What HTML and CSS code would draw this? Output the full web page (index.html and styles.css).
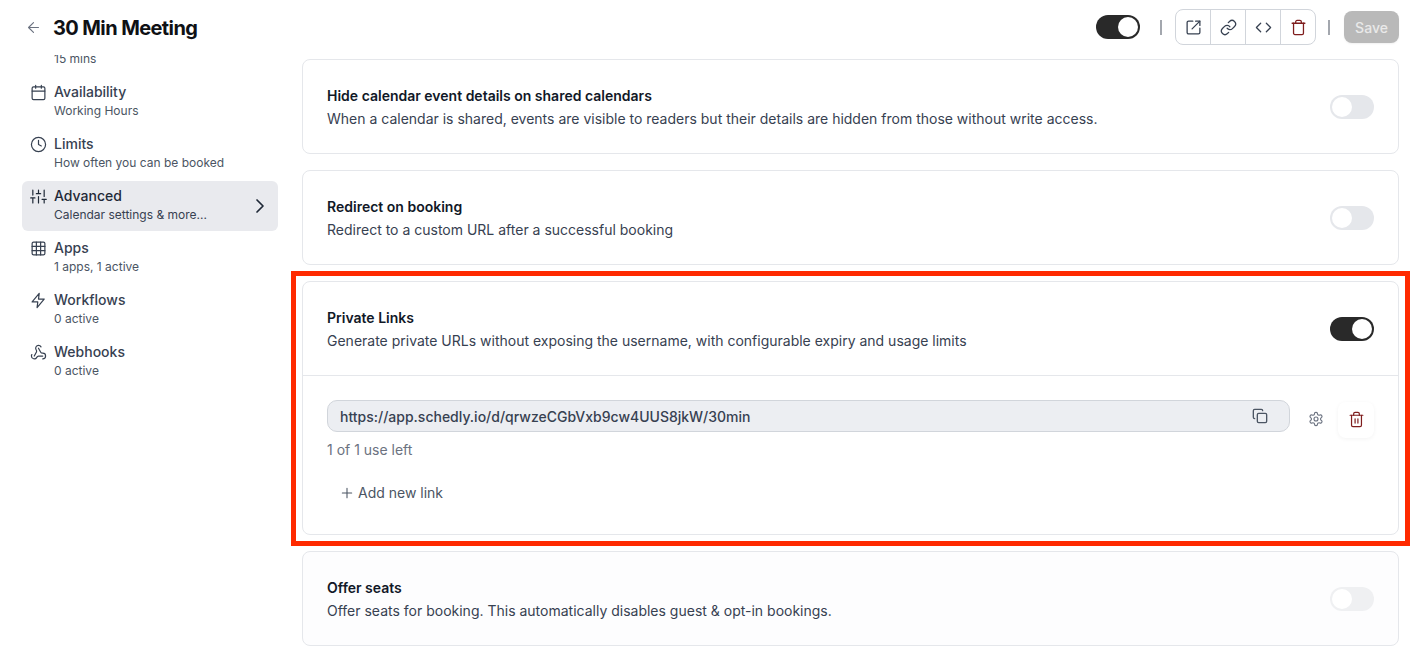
FILE: index.html
```html
<!DOCTYPE html>
<html lang="en">
<head>
<meta charset="utf-8">
<title>30 Min Meeting</title>
<link rel="stylesheet" href="styles.css">
</head>
<body>
<div class="page">
  <header class="top">
    <div class="top-left">
      <svg class="back" viewBox="0 0 24 24"><path d="M19 12H5M12 19l-7-7 7-7"/></svg>
      <h1>30 Min Meeting</h1>
    </div>
    <div class="top-right">
      <span class="toggle on"><i></i></span>
      <span class="sep"></span>
      <div class="btn-group">
        <span class="gbtn"><svg viewBox="0 0 24 24"><path d="M21 13v6a2 2 0 0 1-2 2H5a2 2 0 0 1-2-2V5a2 2 0 0 1 2-2h6"/><path d="M15 3h6v6"/><path d="M10 14 21 3"/></svg></span>
        <span class="gbtn"><svg viewBox="0 0 24 24"><path d="M10 13a5 5 0 0 0 7.54.54l3-3a5 5 0 0 0-7.07-7.07l-1.72 1.71"/><path d="M14 11a5 5 0 0 0-7.54-.54l-3 3a5 5 0 0 0 7.07 7.07l1.71-1.71"/></svg></span>
        <span class="gbtn"><svg viewBox="0 0 24 24"><path d="m16 18 6-6-6-6"/><path d="m8 6-6 6 6 6"/></svg></span>
        <span class="gbtn danger"><svg viewBox="0 0 24 24"><path d="M3 6h18"/><path d="M19 6v14a2 2 0 0 1-2 2H7a2 2 0 0 1-2-2V6"/><path d="M8 6V4a2 2 0 0 1 2-2h4a2 2 0 0 1 2 2v2"/></svg></span>
      </div>
      <span class="sep"></span>
      <button class="save">Save</button>
    </div>
  </header>
  <div class="body">
    <nav class="side">
      <div class="side-scroll">
        <a class="item"><span class="ic"></span><span class="lbl lbl-sub"><small>15 mins</small></span></a>
        <a class="item"><svg class="ic" viewBox="0 0 24 24"><path d="M8 2v4M16 2v4"/><rect x="3" y="4" width="18" height="18" rx="2"/><path d="M3 10h18"/></svg><span class="lbl"><b>Availability</b><small>Working Hours</small></span></a>
        <a class="item"><svg class="ic" viewBox="0 0 24 24"><circle cx="12" cy="12" r="10"/><path d="M12 6v6l4 2"/></svg><span class="lbl"><b>Limits</b><small>How often you can be booked</small></span></a>
        <a class="item active"><svg class="ic" viewBox="0 0 24 24"><path d="M4 21v-7M4 10V3M12 21v-9M12 8V3M20 21v-5M20 12V3M1 14h6M9 8h6M17 16h6"/></svg><span class="lbl"><b>Advanced</b><small>Calendar settings &amp; more...</small></span><svg class="chev" viewBox="0 0 24 24"><path d="m9 18 6-6-6-6"/></svg></a>
        <a class="item"><svg class="ic" viewBox="0 0 24 24"><rect x="3" y="3" width="18" height="18" rx="2"/><path d="M3 9h18M3 15h18M9 3v18M15 3v18"/></svg><span class="lbl"><b>Apps</b><small>1 apps, 1 active</small></span></a>
        <a class="item"><svg class="ic" viewBox="0 0 24 24"><path d="M13 2 3 14h8l-1 8 10-12h-8l1-8z"/></svg><span class="lbl"><b>Workflows</b><small>0 active</small></span></a>
        <a class="item"><svg class="ic" viewBox="0 0 24 24"><path d="M18 16.98h-5.99c-1.1 0-1.95.94-2.48 1.9A4 4 0 0 1 2 17c.01-.7.2-1.4.57-2"/><path d="m6 17 3.13-5.78c.53-.97.1-2.18-.5-3.1a4 4 0 1 1 6.89-4.06"/><path d="m12 6 3.13 5.73C15.66 12.7 16.9 13 18 13a4 4 0 0 1 0 8"/></svg><span class="lbl"><b>Webhooks</b><small>0 active</small></span></a>
      </div>
    </nav>
    <main class="main">
      <section class="card">
        <div class="row">
          <div class="txt"><h3>Hide calendar event details on shared calendars</h3><p>When a calendar is shared, events are visible to readers but their details are hidden from those without write access.</p></div>
          <span class="toggle"><i></i></span>
        </div>
      </section>
      <section class="card">
        <div class="row">
          <div class="txt"><h3>Redirect on booking</h3><p>Redirect to a custom URL after a successful booking</p></div>
          <span class="toggle"><i></i></span>
        </div>
      </section>
      <section class="card">
        <div class="row ruled">
          <div class="txt"><h3>Private Links</h3><p>Generate private URLs without exposing the username, with configurable expiry and usage limits</p></div>
          <span class="toggle on"><i></i></span>
        </div>
        <div class="links">
          <div class="link-row">
            <div class="url"><span>https://app.schedly.io/d/qrwzeCGbVxb9cw4UUS8jkW/30min</span>
              <svg class="copy" viewBox="0 0 24 24"><rect x="8" y="8" width="14" height="14" rx="2"/><path d="M4 16c-1.1 0-2-.9-2-2V4c0-1.1.9-2 2-2h10c1.1 0 2 .9 2 2"/></svg>
            </div>
            <span class="icon-btn"><svg viewBox="0 0 24 24"><path d="M12.22 2h-.44a2 2 0 0 0-2 2v.18a2 2 0 0 1-1 1.73l-.43.25a2 2 0 0 1-2 0l-.15-.08a2 2 0 0 0-2.73.73l-.22.38a2 2 0 0 0 .73 2.73l.15.1a2 2 0 0 1 1 1.72v.51a2 2 0 0 1-1 1.74l-.15.09a2 2 0 0 0-.73 2.73l.22.38a2 2 0 0 0 2.73.73l.15-.08a2 2 0 0 1 2 0l.43.25a2 2 0 0 1 1 1.73V20a2 2 0 0 0 2 2h.44a2 2 0 0 0 2-2v-.18a2 2 0 0 1 1-1.73l.43-.25a2 2 0 0 1 2 0l.15.08a2 2 0 0 0 2.73-.73l.22-.39a2 2 0 0 0-.73-2.73l-.15-.08a2 2 0 0 1-1-1.74v-.5a2 2 0 0 1 1-1.74l.15-.09a2 2 0 0 0 .73-2.73l-.22-.38a2 2 0 0 0-2.73-.73l-.15.08a2 2 0 0 1-2 0l-.43-.25a2 2 0 0 1-1-1.73V4a2 2 0 0 0-2-2z"/><circle cx="12" cy="12" r="3"/></svg></span>
            <span class="icon-btn danger raised"><svg viewBox="0 0 24 24"><path d="M3 6h18"/><path d="M19 6v14a2 2 0 0 1-2 2H7a2 2 0 0 1-2-2V6"/><path d="M8 6V4a2 2 0 0 1 2-2h4a2 2 0 0 1 2 2v2"/><path d="M10 11v6M14 11v6"/></svg></span>
          </div>
          <p class="uses">1 of 1 use left</p>
          <div class="add"><svg viewBox="0 0 24 24"><path d="M5 12h14M12 5v14"/></svg>Add new link</div>
        </div>
      </section>
      <section class="card disabled">
        <div class="row">
          <div class="txt"><h3>Offer seats</h3><p>Offer seats for booking. This automatically disables guest &amp; opt-in bookings.</p></div>
          <span class="toggle"><i></i></span>
        </div>
      </section>
    </main>
  </div>
  <div class="callout"></div>
</div>
</body>
</html>
```
FILE: styles.css
```css
* { box-sizing: border-box; }
html, body { margin: 0; height: 100%; overflow: hidden; background: #fff; }
body { font-family: Inter, "Liberation Sans", sans-serif; color: #111827; }
svg { fill: none; stroke: currentColor; stroke-width: 2; stroke-linecap: round; stroke-linejoin: round; flex: none; display: block; }

.page { position: relative; width: 1419px; height: 660px; overflow: hidden; display: flex; flex-direction: column; }

.top { height: 55px; flex: none; display: flex; align-items: center; justify-content: space-between; padding: 0 20px 1px 25px; position: relative; z-index: 2; background: #fff; }
.top-left { display: flex; align-items: center; gap: 11px; }
.back { width: 17px; height: 17px; color: #6b7280; stroke-width: 1.6; }
h1 { margin: 1px 0 0; font-size: 20px; line-height: 24px; font-weight: 700; color: #0f1115; letter-spacing: -0.6px; }
.top-right { display: flex; align-items: center; }
.top-right > .toggle { margin-right: 20px; }
.sep { width: 2px; height: 15px; background: #a3a7ae; }
.btn-group { display: flex; height: 36px; margin: 0 12px 0 13px; border: 1px solid #d1d5db; border-radius: 8px; }
.gbtn { width: 35px; display: flex; align-items: center; justify-content: center; color: #374151; border-left: 1px solid #d1d5db; }
.gbtn:first-child { border-left: 0; width: 34px; }
.gbtn svg { width: 17px; height: 17px; stroke-width: 1.8; }
.gbtn.danger { color: #7f1d1d; }
.save { width: 55px; height: 32px; margin-left: 14px; border: 0; border-radius: 8px; background: #b9b9b9; color: #e9e9e9; font: 500 14px Inter, sans-serif; padding: 0; box-shadow: 0 1px 2px rgba(0,0,0,.06); }

.toggle { width: 44px; height: 24px; border-radius: 12px; background: #e5e7eb; padding: 2px; display: flex; flex: none; }
.toggle i { width: 20px; height: 20px; border-radius: 50%; background: #fff; display: block; }
.toggle.on { background: #292929; justify-content: flex-end; }

.body { flex: 1; min-height: 0; display: flex; }
.side { width: 302px; flex: none; padding: 0 24px 0 22px; overflow: hidden; }
.side-scroll { margin-top: -30px; display: flex; flex-direction: column; gap: 2px; }
.item { height: 50px; flex: none; display: flex; align-items: flex-start; gap: 7px; padding: 0 6px 0 8px; border-radius: 6px; color: #374151; }
.item.active { background: #e9eaee; color: #1f2937; }
.ic { width: 17px; height: 17px; margin-top: 7px; stroke-width: 1.7; flex: none; }
.lbl { display: flex; flex-direction: column; flex: 1; min-width: 0; padding-top: 5px; }
.lbl-sub { padding-top: 26px; }
.lbl b { font-size: 14px; line-height: 20px; font-weight: 500; }
.lbl small { margin-top: 1px; font-size: 12px; line-height: 16px; color: #4b5563; }
.lbl-sub small { margin-top: 0; }
.item.active small { color: #374151; }
.chev { width: 24px; height: 24px; align-self: center; color: #1f2937; stroke-width: 1.7; }

.main { flex: 1; min-width: 0; padding: 4px 20px 0 0; display: flex; flex-direction: column; gap: 16px; }
.card { border: 1px solid #e5e7eb; border-radius: 8px; background: #fff; flex: none; }
.card.disabled { background: #fdfdfe; }
.card.disabled .toggle { background: #eff0f2; }
.row { height: 93px; display: flex; align-items: center; justify-content: space-between; padding: 0 24px; }
.row.ruled { height: 94px; border-bottom: 1px solid #e5e7eb; }
.txt { padding-top: 1px; }
h3 { margin: 0; font-size: 14px; line-height: 20px; font-weight: 600; color: #111827; }
.txt p { margin: 3px 0 0; font-size: 14px; line-height: 20px; color: #374151; }

.links { height: 158px; padding: 22px 24px 0; }
.link-row { display: flex; align-items: flex-start; }
.url { flex: 1; height: 32px; margin-top: 2px; display: flex; align-items: center; justify-content: space-between; padding: 0 21px 0 12px; background: #eceef2; border: 1px solid #d1d5db; border-radius: 10px; font-size: 14px; font-weight: 500; color: #374151; }
.copy { width: 16px; height: 16px; color: #4b5563; }
.icon-btn { width: 36px; height: 36px; margin: 4px 0 0 8px; padding-bottom: 2px; display: flex; align-items: center; justify-content: center; color: #6b7280; border-radius: 8px; }
.icon-btn + .icon-btn { margin-left: 4px; }
.icon-btn svg { width: 16px; height: 16px; stroke-width: 1.7; }
.icon-btn.danger { color: #7f1d1d; }
.icon-btn.danger svg { width: 17px; height: 17px; }
.raised { box-shadow: 0 1px 4px rgba(0,0,0,.05); }
.uses { margin: 2px 0 0; font-size: 14px; line-height: 20px; color: #6b7280; }
.add { display: flex; align-items: center; gap: 3px; margin: 23px 0 0 12px; font-size: 14px; line-height: 20px; font-weight: 400; color: #4b5563; }
.add svg { width: 16px; height: 16px; stroke-width: 1.6; }

.callout { position: absolute; left: 291px; top: 271px; width: 1119px; height: 275px; border: 5px solid #ff2a00; z-index: 3; pointer-events: none; }
```
